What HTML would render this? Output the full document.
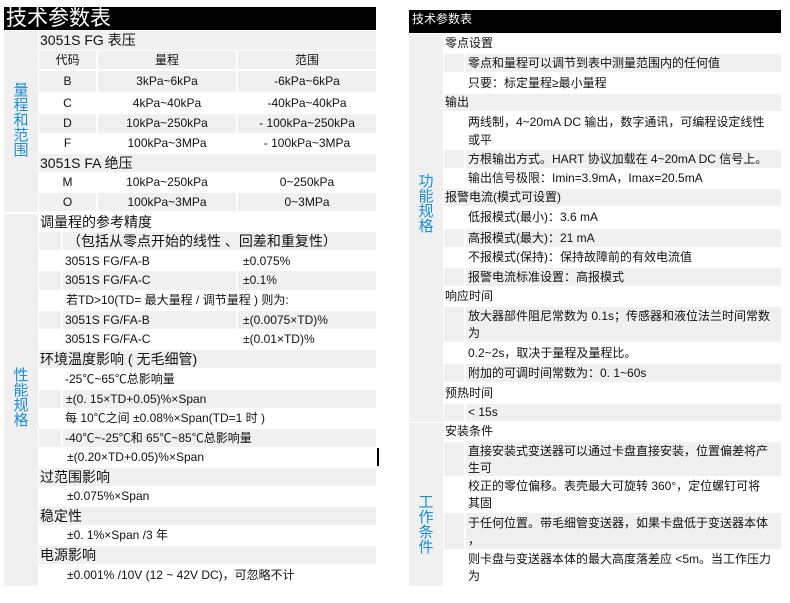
<!DOCTYPE html>
<html><head><meta charset="utf-8"><style>
body{margin:0;width:790px;height:603px;background:#fff;position:relative;overflow:hidden;font-family:"Liberation Sans","Noto Sans CJK SC",sans-serif;color:#111;font-size:12px}
div{position:absolute;box-sizing:border-box;white-space:nowrap}
.g{background:#f0f0f0}
.lab{color:#1a8ed6;font-size:15px;line-height:15px;text-align:center;white-space:normal;width:20px}
.c{text-align:center}
</style></head><body>
<!-- LEFT -->
<div style="left:4px;top:7px;width:372px;height:23px;background:#000;color:#fff;font-size:21px;line-height:23px;padding-left:2px">技术参数表</div>
<div class="g" style="left:4px;top:31px;width:34px;height:181px"></div>
<div class="g" style="left:4px;top:214px;width:34px;height:372px"></div>
<div class="lab" style="left:11px;top:83px">量程和范围</div>
<div class="lab" style="left:11px;top:368px">性能规格</div>

<div class="g" style="left:39px;top:31px;width:337px;height:19px;font-size:14px;line-height:19px;padding-left:1px">3051S FG 表压</div>
<div class="g c" style="left:39px;top:51px;width:57px;height:18px;line-height:18px">代码</div>
<div class="g c" style="left:98px;top:51px;width:138px;height:18px;line-height:18px">量程</div>
<div class="g c" style="left:238px;top:51px;width:138px;height:18px;line-height:18px">范围</div>

<div class="g c" style="left:39px;top:71px;width:57px;height:21px;line-height:21px">B</div>
<div class="g c" style="left:98px;top:71px;width:138px;height:21px;line-height:21px">3kPa~6kPa</div>
<div class="g c" style="left:238px;top:71px;width:138px;height:21px;line-height:21px">-6kPa~6kPa</div>
<div class="c" style="left:39px;top:93px;width:57px;height:20px;line-height:20px">C</div>
<div class="c" style="left:98px;top:93px;width:138px;height:20px;line-height:20px">4kPa~40kPa</div>
<div class="c" style="left:238px;top:93px;width:138px;height:20px;line-height:20px">-40kPa~40kPa</div>
<div class="g c" style="left:39px;top:114px;width:57px;height:19px;line-height:19px">D</div>
<div class="g c" style="left:98px;top:114px;width:138px;height:19px;line-height:19px">10kPa~250kPa</div>
<div class="g c" style="left:238px;top:114px;width:138px;height:19px;line-height:19px">- 100kPa~250kPa</div>
<div class="c" style="left:39px;top:134px;width:57px;height:19px;line-height:19px">F</div>
<div class="c" style="left:98px;top:134px;width:138px;height:19px;line-height:19px">100kPa~3MPa</div>
<div class="c" style="left:238px;top:134px;width:138px;height:19px;line-height:19px">- 100kPa~3MPa</div>
<div class="g" style="left:39px;top:154px;width:337px;height:18px;font-size:14px;line-height:18px;padding-left:1px">3051S FA 绝压</div>
<div class="c" style="left:39px;top:172px;width:57px;height:20px;line-height:20px">M</div>
<div class="c" style="left:98px;top:172px;width:138px;height:20px;line-height:20px">10kPa~250kPa</div>
<div class="c" style="left:238px;top:172px;width:138px;height:20px;line-height:20px">0~250kPa</div>
<div class="g c" style="left:39px;top:193px;width:57px;height:18px;line-height:18px">O</div>
<div class="g c" style="left:98px;top:193px;width:138px;height:18px;line-height:18px">100kPa~3MPa</div>
<div class="g c" style="left:238px;top:193px;width:138px;height:18px;line-height:18px">0~3MPa</div>

<div style="left:39px;top:213px;width:337px;height:19px;font-size:14px;line-height:19px;padding-left:1px">调量程的参考精度</div>
<div class="g" style="left:39px;top:232px;width:22px;height:18px"></div>
<div class="g" style="left:63px;top:232px;width:313px;height:18px;font-size:14px;line-height:18px;padding-left:4px">（包括从零点开始的线性 、回差和重复性）</div>
<div style="left:65px;top:251px;height:20px;line-height:20px">3051S FG/FA-B</div>
<div style="left:243px;top:251px;height:20px;line-height:20px">±0.075%</div>
<div class="g" style="left:39px;top:271px;width:22px;height:19px"></div>
<div class="g" style="left:63px;top:271px;width:173px;height:19px;line-height:19px;padding-left:2px">3051S FG/FA-C</div>
<div class="g" style="left:238px;top:271px;width:138px;height:19px;line-height:19px;padding-left:5px">±0.1%</div>
<div style="left:66px;top:290px;height:20px;line-height:20px">若TD&gt;10(TD= 最大量程 / 调节量程 ) 则为:</div>
<div class="g" style="left:39px;top:311px;width:22px;height:18px"></div>
<div class="g" style="left:63px;top:311px;width:173px;height:18px;line-height:18px;padding-left:2px">3051S FG/FA-B</div>
<div class="g" style="left:238px;top:311px;width:138px;height:18px;line-height:18px;padding-left:5px">±(0.0075×TD)%</div>
<div style="left:65px;top:330px;height:19px;line-height:19px">3051S FG/FA-C</div>
<div style="left:243px;top:330px;height:19px;line-height:19px">±(0.01×TD)%</div>
<div class="g" style="left:39px;top:350px;width:337px;height:18px;font-size:14px;line-height:18px;padding-left:1px">环境温度影响 ( 无毛细管)</div>
<div style="left:65px;top:369px;height:20px;line-height:20px">-25℃~65℃总影响量</div>
<div class="g" style="left:39px;top:390px;width:22px;height:18px"></div>
<div class="g" style="left:63px;top:390px;width:313px;height:18px;line-height:18px;padding-left:3px">±(0. 15×TD+0.05)%×Span</div>
<div style="left:65px;top:409px;height:19px;line-height:19px">每 10℃之间 ±0.08%×Span(TD=1 时 )</div>
<div class="g" style="left:39px;top:429px;width:22px;height:18px"></div>
<div class="g" style="left:63px;top:429px;width:313px;height:18px;line-height:18px;padding-left:2px">-40℃~-25℃和 65℃~85℃总影响量</div>
<div style="left:67px;top:448px;height:19px;line-height:19px">±(0.20×TD+0.05)%×Span</div>
<div style="left:377px;top:448px;width:2px;height:18px;background:#000"></div>
<div class="g" style="left:39px;top:468px;width:337px;height:18px;font-size:14px;line-height:18px;padding-left:1px">过范围影响</div>
<div style="left:67px;top:487px;height:19px;line-height:19px">±0.075%×Span</div>
<div class="g" style="left:39px;top:507px;width:337px;height:18px;font-size:14px;line-height:18px;padding-left:1px">稳定性</div>
<div style="left:67px;top:526px;height:19px;line-height:19px">±0. 1%×Span /3 年</div>
<div class="g" style="left:39px;top:546px;width:337px;height:18px;font-size:14px;line-height:18px;padding-left:1px">电源影响</div>
<div style="left:67px;top:565px;height:20px;line-height:20px">±0.001% /10V (12 ~ 42V DC)，可忽略不计</div>

<!-- RIGHT -->
<div style="left:409px;top:10px;width:372px;height:23px;background:#000;color:#fff;font-size:12px;line-height:14px;padding:2px 0 0 3px">技术参数表</div>
<div class="g" style="left:409px;top:34px;width:34px;height:388px"></div>
<div class="g" style="left:409px;top:423px;width:34px;height:163px"></div>
<div class="lab" style="left:416px;top:174px">功能规格</div>
<div class="lab" style="left:416px;top:495px">工作条件</div>

<div style="left:445px;top:34px;height:19px;line-height:19px">零点设置</div>
<div class="g" style="left:444px;top:54px;width:20px;height:18px"></div>
<div class="g" style="left:466px;top:54px;width:315px;height:18px;line-height:18px;padding-left:2px">零点和量程可以调节到表中测量范围内的任何值</div>
<div style="left:468px;top:73px;height:20px;line-height:20px">只要：标定量程≥最小量程</div>
<div class="g" style="left:444px;top:94px;width:337px;height:17px;line-height:17px;padding-left:1px">输出</div>
<div style="left:468px;top:113px;line-height:18px">两线制，4~20mA DC 输出，数字通讯，可编程设定线性<br>或平</div>
<div class="g" style="left:444px;top:150px;width:20px;height:18px"></div>
<div class="g" style="left:466px;top:150px;width:315px;height:18px;line-height:18px;padding-left:2px">方根输出方式。HART 协议加载在 4~20mA DC 信号上。</div>
<div style="left:468px;top:169px;height:19px;line-height:19px">输出信号极限：Imin=3.9mA，Imax=20.5mA</div>
<div class="g" style="left:444px;top:189px;width:337px;height:17px;line-height:17px;padding-left:1px">报警电流(模式可设置)</div>
<div style="left:468px;top:207px;height:21px;line-height:21px">低报模式(最小)：3.6 mA</div>
<div class="g" style="left:444px;top:229px;width:20px;height:18px"></div>
<div class="g" style="left:466px;top:229px;width:315px;height:18px;line-height:18px;padding-left:2px">高报模式(最大)：21 mA</div>
<div style="left:468px;top:248px;height:19px;line-height:19px">不报模式(保持)：保持故障前的有效电流值</div>
<div class="g" style="left:444px;top:268px;width:20px;height:18px"></div>
<div class="g" style="left:466px;top:268px;width:315px;height:18px;line-height:18px;padding-left:2px">报警电流标准设置：高报模式</div>
<div style="left:445px;top:287px;height:19px;line-height:19px">响应时间</div>
<div class="g" style="left:444px;top:307px;width:20px;height:35px"></div>
<div class="g" style="left:466px;top:307px;width:315px;height:35px;line-height:17px;padding:1px 0 0 2px">放大器部件阻尼常数为 0.1s；传感器和液位法兰时间常数<br>为</div>
<div style="left:468px;top:343px;height:20px;line-height:20px">0.2~2s，取决于量程及量程比。</div>
<div class="g" style="left:444px;top:364px;width:20px;height:18px"></div>
<div class="g" style="left:466px;top:364px;width:315px;height:18px;line-height:18px;padding-left:2px">附加的可调时间常数为：0. 1~60s</div>
<div style="left:445px;top:383px;height:20px;line-height:20px">预热时间</div>
<div class="g" style="left:444px;top:404px;width:20px;height:17px"></div>
<div class="g" style="left:466px;top:404px;width:315px;height:17px;line-height:17px;padding-left:2px">&lt; 15s</div>
<div style="left:445px;top:422px;height:19px;line-height:19px">安装条件</div>
<div class="g" style="left:444px;top:442px;width:20px;height:34px"></div>
<div class="g" style="left:466px;top:442px;width:315px;height:34px;line-height:17px;padding:1px 0 0 2px">直接安装式变送器可以通过卡盘直接安装，位置偏差将产<br>生可</div>
<div style="left:468px;top:478px;line-height:17px">校正的零位偏移。表壳最大可旋转 360°，定位螺钉可将<br>其固</div>
<div class="g" style="left:444px;top:513px;width:20px;height:36px"></div>
<div class="g" style="left:466px;top:513px;width:315px;height:36px;line-height:17px;padding:2px 0 0 2px">于任何位置。带毛细管变送器，如果卡盘低于变送器本体<br>，</div>
<div style="left:468px;top:551px;line-height:17px">则卡盘与变送器本体的最大高度落差应 &lt;5m。当工作压力<br>为</div>
</body></html>
